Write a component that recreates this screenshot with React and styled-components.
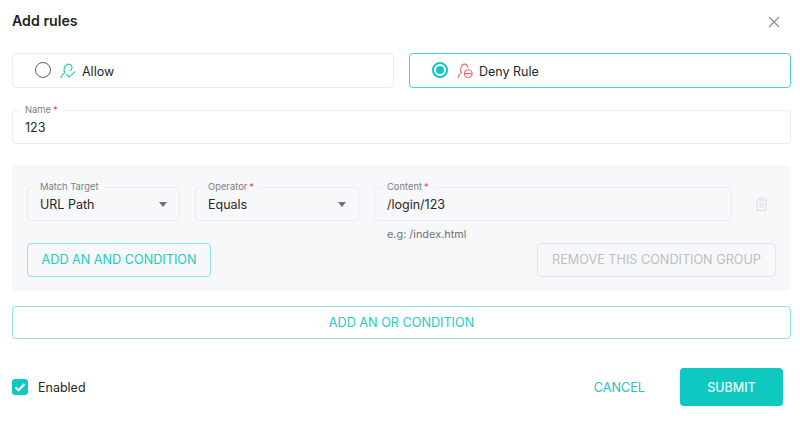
import React from "react";
import styled, { createGlobalStyle } from "styled-components";

const Global = createGlobalStyle`
  html, body { margin: 0; padding: 0; background: #fff; }
  body { font-family: Inter, "Liberation Sans", sans-serif; color: #21262b; }
  * { box-sizing: border-box; }
`;

const teal = "#10c8c2";
const panelBg = "#f7f8fa";

const Dialog = styled.div`
  width: 800px;
  height: 423px;
  padding: 0 9px 0 12px;
  display: flex;
  flex-direction: column;
  overflow: hidden;
`;
const Header = styled.div`
  height: 53px;
  padding-bottom: 11px;
  display: flex;
  align-items: center;
  justify-content: space-between;
`;
const Title = styled.h2`
  margin: 0;
  font-size: 14.2px;
  font-weight: 600;
  line-height: 20px;
  color: #1b1f24;
`;
const CloseIcon = styled.svg`
  width: 12px;
  height: 12px;
  margin-right: 11px;
  margin-top: 1px;
  stroke: #8a8d90;
  stroke-width: 1.2;
  fill: none;
`;
const TypeRow = styled.div`
  display: grid;
  grid-template-columns: 382px 382px;
  column-gap: 15px;
`;
const TypeCard = styled.div`
  height: 35px;
  border: 1px solid ${(p) => (p.$active ? "#45d3ce" : "#e9ecf1")};
  border-radius: 4px;
  padding: 1px 0 0 22px;
  display: flex;
  align-items: center;
  font-size: 12.5px;
  color: #24282d;
`;
const Radio = styled.span`
  width: 16px;
  height: 16px;
  border-radius: 50%;
  border: ${(p) => (p.$on ? `2px solid ${teal}` : "1.5px solid #5f6163")};
  display: flex;
  align-items: center;
  justify-content: center;
  margin-right: 9px;
  margin-top: -2px;
  flex: none;
  &::after {
    content: "";
    width: 8px;
    height: 8px;
    border-radius: 50%;
    background: ${(p) => (p.$on ? teal : "transparent")};
  }
`;
const UserIcon = styled.svg`
  width: 16px;
  height: 16px;
  margin-right: 6px;
  margin-top: -1px;
  fill: none;
  stroke: ${(p) => p.$color};
  stroke-width: 1.1;
  stroke-linecap: round;
  flex: none;
`;
const Field = styled.div`
  position: relative;
  height: 34px;
  border: 1px solid #e9ecf1;
  border-radius: 4px;
  padding: 1px 12px 0;
  display: flex;
  align-items: center;
  justify-content: space-between;
  font-size: 12.5px;
  color: #24282d;
`;
const FloatLabel = styled.label`
  position: absolute;
  left: 7px;
  top: -7px;
  padding: 0 5px;
  background: ${(p) => p.$bg};
  font-size: 9.4px;
  line-height: 11px;
  color: #7b7f84;
  white-space: nowrap;
`;
const Star = styled.span`
  color: #f0474f;
  margin-left: 2px;
`;
const NameWrap = styled.div`
  margin-top: 22px;
`;
const Panel = styled.div`
  margin-top: 21px;
  height: 126px;
  background: ${panelBg};
  border-radius: 4px;
  padding: 22px 15px 0;
`;
const FieldRow = styled.div`
  display: grid;
  grid-template-columns: 153px 164px 358px 1fr;
  column-gap: 15px;
  align-items: start;
`;
const Caret = styled.span`
  width: 0;
  height: 0;
  border-left: 4.5px solid transparent;
  border-right: 4.5px solid transparent;
  border-top: 5px solid #6f7277;
`;
const Helper = styled.div`
  font-size: 10.9px;
  line-height: 14px;
  color: #6f7378;
  padding: 6px 0 0 13px;
`;
const TrashCell = styled.div`
  height: 33px;
  padding-left: 8px;
  display: flex;
  align-items: center;
`;
const TrashIcon = styled.svg`
  width: 13px;
  height: 14px;
  fill: none;
  stroke: #dcdee1;
  stroke-width: 1.1;
`;
const ButtonRow = styled.div`
  margin-top: 2px;
  display: flex;
  justify-content: space-between;
`;
const OutlineButton = styled.button`
  height: ${(p) => p.$h || "34px"};
  width: ${(p) => p.$w || "auto"};
  padding: 0 0 1px;
  border: 1px solid ${(p) => (p.$disabled ? "#e2e4e8" : "#8ce3e0")};
  border-radius: 4px;
  background: transparent;
  color: ${(p) => (p.$disabled ? "#bcbfc3" : "#22cbc6")};
  font: 400 12.65px Inter, "Liberation Sans", sans-serif;
`;
const OrWrap = styled.div`
  margin-top: 15px;
`;
const Footer = styled.div`
  margin-top: 29px;
  height: 38px;
  display: flex;
  align-items: center;
  justify-content: space-between;
  padding-right: 8px;
`;
const Check = styled.label`
  display: flex;
  align-items: center;
  font-size: 12.5px;
  color: #24282d;
`;
const CheckBox = styled.span`
  width: 16px;
  height: 16px;
  border-radius: 3px;
  background: ${teal};
  margin-right: 10px;
  display: flex;
  align-items: center;
  justify-content: center;
`;
const CheckIcon = styled.svg`
  width: 12px;
  height: 12px;
  fill: none;
  stroke: #fff;
  stroke-width: 2;
`;
const Actions = styled.div`
  display: flex;
  align-items: center;
`;
const TextButton = styled.button`
  border: 0;
  background: none;
  padding: 0;
  margin-right: 35px;
  color: #22c4c0;
  font: 400 12.65px Inter, "Liberation Sans", sans-serif;
`;
const Submit = styled.button`
  width: 103px;
  height: 38px;
  border: 0;
  border-radius: 4px;
  background: ${teal};
  color: #eafafa;
  font: 500 12.5px Inter, "Liberation Sans", sans-serif;
`;

const AllowGlyph = () => (
  <UserIcon $color="#1fc9a8" viewBox="0 0 16 16">
    <path d="M1 14.5c.6-2.4 1.8-3.8 3.8-4.8C3.4 7.6 3.6 1.8 8 1.2c3-.3 4.8 2.2 3.7 4.8-.3.7-.8 1.2-1.4 1.6" />
    <path d="M6.5 11.5l2.6 2.6 5.4-5.2" />
  </UserIcon>
);
const DenyGlyph = () => (
  <UserIcon $color="#f4696c" viewBox="0 0 16 16">
    <path d="M1 14.5c.6-2.2 1.8-3.6 3.4-4.6C3 7.6 3.6 1.3 7.4 1.1c2-.1 3.2 1.3 3.4 3.1" />
    <circle cx="11.2" cy="10.6" r="3.9" />
    <path d="M7.5 10.6h7.4" />
  </UserIcon>
);

export default function App() {
  return (
    <Dialog>
      <Global />
      <Header>
        <Title>Add rules</Title>
        <CloseIcon viewBox="0 0 12 12">
          <path d="M1 1l10 10M11 1L1 11" />
        </CloseIcon>
      </Header>
      <TypeRow>
        <TypeCard>
          <Radio />
          <AllowGlyph />
          Allow
        </TypeCard>
        <TypeCard $active>
          <Radio $on />
          <DenyGlyph />
          Deny Rule
        </TypeCard>
      </TypeRow>
      <NameWrap>
        <Field>
          <FloatLabel $bg="#fff">Name<Star>*</Star></FloatLabel>
          123
        </Field>
      </NameWrap>
      <Panel>
        <FieldRow>
          <Field>
            <FloatLabel $bg={panelBg}>Match Target</FloatLabel>
            URL Path
            <Caret />
          </Field>
          <Field>
            <FloatLabel $bg={panelBg}>Operator<Star>*</Star></FloatLabel>
            Equals
            <Caret />
          </Field>
          <div>
            <Field>
              <FloatLabel $bg={panelBg}>Content<Star>*</Star></FloatLabel>
              /login/123
            </Field>
            <Helper>e.g: /index.html</Helper>
          </div>
          <TrashCell>
            <TrashIcon viewBox="0 0 13 14">
              <path d="M.5 3h12M4.5 3V1h4v2M2 3v10.4h9V3M5.2 5.5v5.4M7.8 5.5v5.4" />
            </TrashIcon>
          </TrashCell>
        </FieldRow>
        <ButtonRow>
          <OutlineButton $w="184px">ADD AN AND CONDITION</OutlineButton>
          <OutlineButton $w="239px" $disabled>REMOVE THIS CONDITION GROUP</OutlineButton>
        </ButtonRow>
      </Panel>
      <OrWrap>
        <OutlineButton $w="100%" $h="33px">ADD AN OR CONDITION</OutlineButton>
      </OrWrap>
      <Footer>
        <Check>
          <CheckBox>
            <CheckIcon viewBox="0 0 12 12">
              <path d="M1.5 6.2l3 3 6-6.2" />
            </CheckIcon>
          </CheckBox>
          Enabled
        </Check>
        <Actions>
          <TextButton>CANCEL</TextButton>
          <Submit>SUBMIT</Submit>
        </Actions>
      </Footer>
    </Dialog>
  );
}
